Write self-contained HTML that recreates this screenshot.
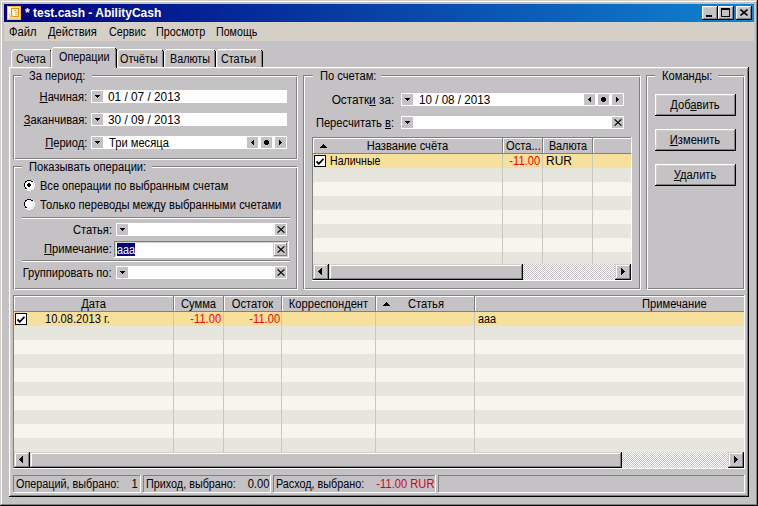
<!DOCTYPE html>
<html><head><meta charset="utf-8"><style>
html,body{margin:0;padding:0;width:758px;height:506px;overflow:hidden;background:#c5c2c6}
#w{position:relative;width:758px;height:506px;overflow:hidden}
#w div,#w span,#w svg{position:absolute;display:block}
#w span{font-family:"Liberation Sans",sans-serif;font-size:12px;line-height:13px;white-space:nowrap;color:#000;transform:scaleX(.93);transform-origin:0 0}
#w span.r{transform-origin:100% 0}
#w span.c{transform-origin:50% 0}
#w u{text-decoration:underline;text-underline-offset:1px}
</style></head><body><div id="w">
<div style="left:0px;top:0px;width:758px;height:506px;background:#c5c2c6;"></div>
<div style="left:0px;top:0px;width:758px;height:1px;background:#d4d0c8;"></div>
<div style="left:0px;top:0px;width:1px;height:506px;background:#d4d0c8;"></div>
<div style="left:1px;top:1px;width:756px;height:1px;background:#ffffff;"></div>
<div style="left:1px;top:1px;width:1px;height:504px;background:#ffffff;"></div>
<div style="left:0px;top:505px;width:758px;height:1px;background:#0a0a0a;"></div>
<div style="left:757px;top:0px;width:1px;height:506px;background:#0a0a0a;"></div>
<div style="left:1px;top:504px;width:756px;height:1px;background:#808080;"></div>
<div style="left:756px;top:1px;width:1px;height:504px;background:#808080;"></div>
<div style="left:4px;top:4px;width:750px;height:18px;background:linear-gradient(to right,#000080,#1084d0);"></div>
<svg style="left:7px;top:6px" width="14" height="14" viewBox="0 0 14 14" shape-rendering="crispEdges"><rect x="0" y="0" width="14" height="14" fill="#f7c148"/><rect x="1" y="1" width="12" height="12" fill="#fde9b0"/><rect x="1" y="1" width="3" height="11" fill="#fff8e8"/><rect x="4" y="2" width="8" height="9" fill="#f08c10"/><rect x="5" y="3" width="6" height="7" fill="#fff6e0"/><rect x="5" y="3" width="5" height="1" fill="#ffffff"/><rect x="7" y="4" width="2" height="1" fill="#f4a030"/><rect x="5" y="5" width="5" height="1" fill="#ffffff"/><rect x="8" y="6" width="2" height="1" fill="#f4a030"/><rect x="6" y="7" width="4" height="1" fill="#ffffff"/><rect x="8" y="8" width="2" height="1" fill="#f4a030"/><rect x="2" y="8" width="1" height="1" fill="#e8a020"/><rect x="4" y="7" width="1" height="1" fill="#e8a020"/><rect x="3" y="10" width="1" height="1" fill="#e8a020"/><rect x="5" y="9" width="1" height="1" fill="#e8a020"/><rect x="2" y="9" width="4" height="3" fill="#f6c870" opacity=".6"/><rect x="1" y="12" width="12" height="1" fill="#f4d890"/></svg>
<span style="left:25px;top:7px;color:#fff;font-weight:bold;font-size:12px;transform:none">* test.cash - AbilityCash</span>
<div style="left:702px;top:6px;width:16px;height:14px;background:#c5c2c6;"></div>
<div style="left:702px;top:6px;width:16px;height:1px;background:#ffffff;"></div>
<div style="left:702px;top:6px;width:1px;height:14px;background:#ffffff;"></div>
<div style="left:703px;top:7px;width:14px;height:1px;background:#d4d0c8;"></div>
<div style="left:703px;top:7px;width:1px;height:12px;background:#d4d0c8;"></div>
<div style="left:702px;top:19px;width:16px;height:1px;background:#000000;"></div>
<div style="left:717px;top:6px;width:1px;height:14px;background:#000000;"></div>
<div style="left:703px;top:18px;width:14px;height:1px;background:#808080;"></div>
<div style="left:716px;top:7px;width:1px;height:12px;background:#808080;"></div>
<div style="left:718px;top:6px;width:16px;height:14px;background:#c5c2c6;"></div>
<div style="left:718px;top:6px;width:16px;height:1px;background:#ffffff;"></div>
<div style="left:718px;top:6px;width:1px;height:14px;background:#ffffff;"></div>
<div style="left:719px;top:7px;width:14px;height:1px;background:#d4d0c8;"></div>
<div style="left:719px;top:7px;width:1px;height:12px;background:#d4d0c8;"></div>
<div style="left:718px;top:19px;width:16px;height:1px;background:#000000;"></div>
<div style="left:733px;top:6px;width:1px;height:14px;background:#000000;"></div>
<div style="left:719px;top:18px;width:14px;height:1px;background:#808080;"></div>
<div style="left:732px;top:7px;width:1px;height:12px;background:#808080;"></div>
<div style="left:736px;top:6px;width:16px;height:14px;background:#c5c2c6;"></div>
<div style="left:736px;top:6px;width:16px;height:1px;background:#ffffff;"></div>
<div style="left:736px;top:6px;width:1px;height:14px;background:#ffffff;"></div>
<div style="left:737px;top:7px;width:14px;height:1px;background:#d4d0c8;"></div>
<div style="left:737px;top:7px;width:1px;height:12px;background:#d4d0c8;"></div>
<div style="left:736px;top:19px;width:16px;height:1px;background:#000000;"></div>
<div style="left:751px;top:6px;width:1px;height:14px;background:#000000;"></div>
<div style="left:737px;top:18px;width:14px;height:1px;background:#808080;"></div>
<div style="left:750px;top:7px;width:1px;height:12px;background:#808080;"></div>
<div style="left:706px;top:15px;width:6px;height:2px;background:#000000;"></div>
<div style="left:721px;top:8px;width:9px;height:9px;background:transparent;border:1px solid #000;border-top-width:2px;box-sizing:border-box"></div>
<svg style="left:740px;top:9px" width="8" height="7"><path d="M0.5 0.5L7.5 6.5M7.5 0.5L0.5 6.5" stroke="#000" stroke-width="1.6"/></svg>
<div style="left:4px;top:22px;width:750px;height:19px;background:#d4d0c8;"></div>
<span style="left:9px;top:26px;transform:scaleX(0.93);">Файл</span>
<span style="left:48px;top:26px;transform:scaleX(0.93);">Действия</span>
<span style="left:109px;top:26px;transform:scaleX(0.9);">Сервис</span>
<span style="left:156px;top:26px;transform:scaleX(0.9);">Просмотр</span>
<span style="left:216px;top:26px;transform:scaleX(0.89);">Помощь</span>
<div style="left:9px;top:67px;width:740px;height:1px;background:#ffffff;"></div>
<div style="left:9px;top:67px;width:1px;height:430px;background:#ffffff;"></div>
<div style="left:9px;top:496px;width:740px;height:1px;background:#000000;"></div>
<div style="left:748px;top:67px;width:1px;height:430px;background:#000000;"></div>
<div style="left:10px;top:495px;width:738px;height:1px;background:#808080;"></div>
<div style="left:747px;top:68px;width:1px;height:428px;background:#808080;"></div>
<div style="left:10px;top:68px;width:737px;height:1px;background:#d4d0c8;"></div>
<div style="left:10px;top:68px;width:1px;height:427px;background:#d4d0c8;"></div>
<div style="left:11px;top:49px;width:41px;height:18px;background:#c5c2c6;"></div>
<div style="left:13px;top:49px;width:37px;height:1px;background:#ffffff;"></div>
<div style="left:11px;top:51px;width:1px;height:16px;background:#ffffff;"></div>
<div style="left:12px;top:50px;width:1px;height:1px;background:#ffffff;"></div>
<div style="left:13px;top:50px;width:37px;height:1px;background:#d4d0c8;"></div>
<div style="left:12px;top:51px;width:1px;height:16px;background:#d4d0c8;"></div>
<div style="left:50px;top:51px;width:1px;height:16px;background:#808080;"></div>
<div style="left:50px;top:50px;width:1px;height:1px;background:#000000;"></div>
<div style="left:51px;top:51px;width:1px;height:16px;background:#000000;"></div>
<span style="left:16px;top:53px;transform:scaleX(0.9);">Счета</span>
<div style="left:117px;top:49px;width:47px;height:18px;background:#c5c2c6;"></div>
<div style="left:119px;top:49px;width:43px;height:1px;background:#ffffff;"></div>
<div style="left:117px;top:51px;width:1px;height:16px;background:#ffffff;"></div>
<div style="left:118px;top:50px;width:1px;height:1px;background:#ffffff;"></div>
<div style="left:119px;top:50px;width:43px;height:1px;background:#d4d0c8;"></div>
<div style="left:118px;top:51px;width:1px;height:16px;background:#d4d0c8;"></div>
<div style="left:162px;top:51px;width:1px;height:16px;background:#808080;"></div>
<div style="left:162px;top:50px;width:1px;height:1px;background:#000000;"></div>
<div style="left:163px;top:51px;width:1px;height:16px;background:#000000;"></div>
<span style="left:120px;top:53px;transform:scaleX(0.9);">Отчёты</span>
<div style="left:164px;top:49px;width:52px;height:18px;background:#c5c2c6;"></div>
<div style="left:166px;top:49px;width:48px;height:1px;background:#ffffff;"></div>
<div style="left:164px;top:51px;width:1px;height:16px;background:#ffffff;"></div>
<div style="left:165px;top:50px;width:1px;height:1px;background:#ffffff;"></div>
<div style="left:166px;top:50px;width:48px;height:1px;background:#d4d0c8;"></div>
<div style="left:165px;top:51px;width:1px;height:16px;background:#d4d0c8;"></div>
<div style="left:214px;top:51px;width:1px;height:16px;background:#808080;"></div>
<div style="left:214px;top:50px;width:1px;height:1px;background:#000000;"></div>
<div style="left:215px;top:51px;width:1px;height:16px;background:#000000;"></div>
<span style="left:170px;top:53px;transform:scaleX(0.9);">Валюты</span>
<div style="left:216px;top:49px;width:47px;height:18px;background:#c5c2c6;"></div>
<div style="left:218px;top:49px;width:43px;height:1px;background:#ffffff;"></div>
<div style="left:216px;top:51px;width:1px;height:16px;background:#ffffff;"></div>
<div style="left:217px;top:50px;width:1px;height:1px;background:#ffffff;"></div>
<div style="left:218px;top:50px;width:43px;height:1px;background:#d4d0c8;"></div>
<div style="left:217px;top:51px;width:1px;height:16px;background:#d4d0c8;"></div>
<div style="left:261px;top:51px;width:1px;height:16px;background:#808080;"></div>
<div style="left:261px;top:50px;width:1px;height:1px;background:#000000;"></div>
<div style="left:262px;top:51px;width:1px;height:16px;background:#000000;"></div>
<span style="left:221px;top:53px;transform:scaleX(0.9);">Статьи</span>
<div style="left:51px;top:47px;width:66px;height:21px;background:#c5c2c6;"></div>
<div style="left:53px;top:47px;width:62px;height:1px;background:#ffffff;"></div>
<div style="left:51px;top:49px;width:1px;height:19px;background:#ffffff;"></div>
<div style="left:52px;top:48px;width:1px;height:1px;background:#ffffff;"></div>
<div style="left:53px;top:48px;width:62px;height:1px;background:#d4d0c8;"></div>
<div style="left:52px;top:49px;width:1px;height:19px;background:#d4d0c8;"></div>
<div style="left:115px;top:49px;width:1px;height:19px;background:#808080;"></div>
<div style="left:115px;top:48px;width:1px;height:1px;background:#000000;"></div>
<div style="left:116px;top:49px;width:1px;height:19px;background:#000000;"></div>
<span style="left:59px;top:51px;transform:scaleX(0.9);">Операции</span>
<div style="left:52px;top:67px;width:64px;height:2px;background:#c5c2c6;"></div>
<div style="left:13px;top:75px;width:284px;height:1px;background:#808080;"></div>
<div style="left:13px;top:75px;width:1px;height:84px;background:#808080;"></div>
<div style="left:13px;top:158px;width:284px;height:1px;background:#808080;"></div>
<div style="left:296px;top:75px;width:1px;height:84px;background:#808080;"></div>
<div style="left:14px;top:76px;width:284px;height:1px;background:#ffffff;"></div>
<div style="left:14px;top:76px;width:1px;height:84px;background:#ffffff;"></div>
<div style="left:14px;top:159px;width:284px;height:1px;background:#ffffff;"></div>
<div style="left:297px;top:76px;width:1px;height:84px;background:#ffffff;"></div>
<div style="left:22px;top:75px;width:70px;height:2px;background:#c5c2c6;"></div>
<span style="left:29px;top:70px;">За период:</span>
<div style="left:91px;top:90px;width:196px;height:13px;background:#ffffff;"></div>
<div style="left:92px;top:91px;width:11px;height:11px;background:#c5c2c6;"></div>
<svg style="left:95px;top:95px" width="5" height="3"><path d="M0 0h5v1h-1v1h-1v1h-1v-1h-1v-1h-1z" fill="#000"/></svg>
<span class="r" style="right:671px;top:91px;"><u>Н</u>ачиная:</span>
<span style="left:108px;top:91px;transform:scaleX(0.985);">01 / 07 / 2013</span>
<div style="left:91px;top:113px;width:196px;height:13px;background:#ffffff;"></div>
<div style="left:92px;top:114px;width:11px;height:11px;background:#c5c2c6;"></div>
<svg style="left:95px;top:118px" width="5" height="3"><path d="M0 0h5v1h-1v1h-1v1h-1v-1h-1v-1h-1z" fill="#000"/></svg>
<span class="r" style="right:671px;top:114px;"><u>З</u>аканчивая:</span>
<span style="left:108px;top:114px;transform:scaleX(0.985);">30 / 09 / 2013</span>
<div style="left:91px;top:136px;width:196px;height:13px;background:#ffffff;"></div>
<div style="left:92px;top:137px;width:11px;height:11px;background:#c5c2c6;"></div>
<svg style="left:95px;top:141px" width="5" height="3"><path d="M0 0h5v1h-1v1h-1v1h-1v-1h-1v-1h-1z" fill="#000"/></svg>
<span class="r" style="right:671px;top:137px;"><u>П</u>ериод:</span>
<span style="left:109px;top:137px;">Три месяца</span>
<div style="left:247px;top:137px;width:11px;height:11px;background:#c5c2c6;"></div>
<svg style="left:251px;top:140px" width="3" height="5"><path d="M2 0h1v5h-1v-1h-1v-1h-1v-1h1v-1h1z" fill="#000"/></svg>
<div style="left:261px;top:137px;width:11px;height:11px;background:#c5c2c6;"></div>
<svg style="left:264px;top:140px" width="5" height="5"><path d="M1 0h3v1h1v3h-1v1h-3v-1h-1v-3h1z" fill="#000"/></svg>
<div style="left:275px;top:137px;width:11px;height:11px;background:#c5c2c6;"></div>
<svg style="left:279px;top:140px" width="3" height="5"><path d="M0 0h1v1h1v1h1v1h-1v1h-1v1h-1z" fill="#000"/></svg>
<div style="left:13px;top:166px;width:284px;height:1px;background:#808080;"></div>
<div style="left:13px;top:166px;width:1px;height:123px;background:#808080;"></div>
<div style="left:13px;top:288px;width:284px;height:1px;background:#808080;"></div>
<div style="left:296px;top:166px;width:1px;height:123px;background:#808080;"></div>
<div style="left:14px;top:167px;width:284px;height:1px;background:#ffffff;"></div>
<div style="left:14px;top:167px;width:1px;height:123px;background:#ffffff;"></div>
<div style="left:14px;top:289px;width:284px;height:1px;background:#ffffff;"></div>
<div style="left:297px;top:167px;width:1px;height:123px;background:#ffffff;"></div>
<div style="left:22px;top:166px;width:130px;height:2px;background:#c5c2c6;"></div>
<span style="left:29px;top:161px;">Показывать операции:</span>
<svg style="left:23px;top:179px" width="12" height="12" shape-rendering="crispEdges"><rect x="4" y="2" width="4" height="1" fill="#fff"/><rect x="3" y="3" width="6" height="1" fill="#fff"/><rect x="2" y="4" width="8" height="1" fill="#fff"/><rect x="2" y="5" width="8" height="1" fill="#fff"/><rect x="2" y="6" width="8" height="1" fill="#fff"/><rect x="2" y="7" width="8" height="1" fill="#fff"/><rect x="3" y="8" width="6" height="1" fill="#fff"/><rect x="4" y="9" width="4" height="1" fill="#fff"/><rect x="4" y="1" width="4" height="1" fill="#000"/><rect x="2" y="2" width="2" height="1" fill="#000"/><rect x="8" y="2" width="2" height="1" fill="#000"/><rect x="2" y="3" width="1" height="1" fill="#000"/><rect x="1" y="4" width="1" height="1" fill="#000"/><rect x="1" y="5" width="1" height="1" fill="#000"/><rect x="1" y="6" width="1" height="1" fill="#000"/><rect x="1" y="7" width="1" height="1" fill="#000"/><rect x="2" y="8" width="1" height="1" fill="#000"/><rect x="2" y="9" width="2" height="1" fill="#000"/><rect x="9" y="3" width="1" height="1" fill="#e8e8e8"/><rect x="10" y="4" width="1" height="1" fill="#e8e8e8"/><rect x="10" y="5" width="1" height="1" fill="#e8e8e8"/><rect x="10" y="6" width="1" height="1" fill="#e8e8e8"/><rect x="10" y="7" width="1" height="1" fill="#e8e8e8"/><rect x="9" y="8" width="1" height="1" fill="#e8e8e8"/><rect x="8" y="9" width="2" height="1" fill="#e8e8e8"/><rect x="4" y="10" width="4" height="1" fill="#e8e8e8"/><rect x="10" y="2" width="1" height="1" fill="#fff"/><rect x="10" y="3" width="1" height="1" fill="#fff"/><rect x="11" y="4" width="1" height="1" fill="#fff"/><rect x="11" y="5" width="1" height="1" fill="#fff"/><rect x="11" y="6" width="1" height="1" fill="#fff"/><rect x="11" y="7" width="1" height="1" fill="#fff"/><rect x="10" y="8" width="1" height="1" fill="#fff"/><rect x="10" y="9" width="1" height="1" fill="#fff"/><rect x="8" y="10" width="2" height="1" fill="#fff"/><rect x="2" y="10" width="2" height="1" fill="#fff"/><rect x="4" y="11" width="4" height="1" fill="#fff"/><rect x="5" y="4" width="2" height="1" fill="#000"/><rect x="4" y="5" width="4" height="1" fill="#000"/><rect x="4" y="6" width="4" height="1" fill="#000"/><rect x="5" y="7" width="2" height="1" fill="#000"/></svg>
<span style="left:40px;top:180px;transform:scaleX(0.92);">Все операции по выбранным счетам</span>
<svg style="left:23px;top:198px" width="12" height="12" shape-rendering="crispEdges"><rect x="4" y="2" width="4" height="1" fill="#fff"/><rect x="3" y="3" width="6" height="1" fill="#fff"/><rect x="2" y="4" width="8" height="1" fill="#fff"/><rect x="2" y="5" width="8" height="1" fill="#fff"/><rect x="2" y="6" width="8" height="1" fill="#fff"/><rect x="2" y="7" width="8" height="1" fill="#fff"/><rect x="3" y="8" width="6" height="1" fill="#fff"/><rect x="4" y="9" width="4" height="1" fill="#fff"/><rect x="4" y="1" width="4" height="1" fill="#000"/><rect x="2" y="2" width="2" height="1" fill="#000"/><rect x="8" y="2" width="2" height="1" fill="#000"/><rect x="2" y="3" width="1" height="1" fill="#000"/><rect x="1" y="4" width="1" height="1" fill="#000"/><rect x="1" y="5" width="1" height="1" fill="#000"/><rect x="1" y="6" width="1" height="1" fill="#000"/><rect x="1" y="7" width="1" height="1" fill="#000"/><rect x="2" y="8" width="1" height="1" fill="#000"/><rect x="2" y="9" width="2" height="1" fill="#000"/><rect x="9" y="3" width="1" height="1" fill="#e8e8e8"/><rect x="10" y="4" width="1" height="1" fill="#e8e8e8"/><rect x="10" y="5" width="1" height="1" fill="#e8e8e8"/><rect x="10" y="6" width="1" height="1" fill="#e8e8e8"/><rect x="10" y="7" width="1" height="1" fill="#e8e8e8"/><rect x="9" y="8" width="1" height="1" fill="#e8e8e8"/><rect x="8" y="9" width="2" height="1" fill="#e8e8e8"/><rect x="4" y="10" width="4" height="1" fill="#e8e8e8"/><rect x="10" y="2" width="1" height="1" fill="#fff"/><rect x="10" y="3" width="1" height="1" fill="#fff"/><rect x="11" y="4" width="1" height="1" fill="#fff"/><rect x="11" y="5" width="1" height="1" fill="#fff"/><rect x="11" y="6" width="1" height="1" fill="#fff"/><rect x="11" y="7" width="1" height="1" fill="#fff"/><rect x="10" y="8" width="1" height="1" fill="#fff"/><rect x="10" y="9" width="1" height="1" fill="#fff"/><rect x="8" y="10" width="2" height="1" fill="#fff"/><rect x="2" y="10" width="2" height="1" fill="#fff"/><rect x="4" y="11" width="4" height="1" fill="#fff"/></svg>
<span style="left:40px;top:199px;">Только переводы между выбранными счетами</span>
<div style="left:22px;top:217px;width:268px;height:1px;background:#808080;"></div>
<div style="left:22px;top:218px;width:268px;height:1px;background:#ffffff;"></div>
<div style="left:116px;top:223px;width:171px;height:13px;background:#ffffff;"></div>
<div style="left:117px;top:224px;width:11px;height:11px;background:#c5c2c6;"></div>
<svg style="left:120px;top:228px" width="5" height="3"><path d="M0 0h5v1h-1v1h-1v1h-1v-1h-1v-1h-1z" fill="#000"/></svg>
<span class="r" style="right:646px;top:224px;">Статья:</span>
<div style="left:275px;top:224px;width:11px;height:11px;background:#c5c2c6;"></div>
<svg style="left:277px;top:226px" width="8" height="7"><path d="M0.6 0.4L7.4 6.6M7.4 0.4L0.6 6.6" stroke="#000" stroke-width="1.2"/></svg>
<div style="left:114px;top:241px;width:175px;height:17px;background:#ffffff;"></div>
<div style="left:114px;top:241px;width:174px;height:1px;background:#808080;"></div>
<div style="left:114px;top:241px;width:1px;height:16px;background:#808080;"></div>
<div style="left:115px;top:242px;width:172px;height:1px;background:#d4d0c8;"></div>
<div style="left:115px;top:242px;width:1px;height:14px;background:#d4d0c8;"></div>
<div style="left:114px;top:257px;width:175px;height:1px;background:#ffffff;"></div>
<div style="left:288px;top:241px;width:1px;height:17px;background:#ffffff;"></div>
<div style="left:117px;top:243px;width:18px;height:13px;background:#000080;"></div>
<span style="left:117px;top:244px;transform:scaleX(0.9);color:#fff">aaa</span>
<span class="r" style="right:646px;top:243px;"><u>П</u>римечание:</span>
<div style="left:273px;top:242px;width:15px;height:15px;background:#c5c2c6;"></div>
<div style="left:273px;top:242px;width:15px;height:1px;background:#d4d0c8;"></div>
<div style="left:273px;top:242px;width:1px;height:15px;background:#d4d0c8;"></div>
<div style="left:274px;top:243px;width:13px;height:1px;background:#ffffff;"></div>
<div style="left:274px;top:243px;width:1px;height:13px;background:#ffffff;"></div>
<div style="left:274px;top:255px;width:13px;height:1px;background:#808080;"></div>
<div style="left:286px;top:243px;width:1px;height:13px;background:#808080;"></div>
<div style="left:273px;top:256px;width:15px;height:1px;background:#d4d0c8;"></div>
<div style="left:287px;top:242px;width:1px;height:15px;background:#d4d0c8;"></div>
<svg style="left:277px;top:246px" width="8" height="7"><path d="M0.6 0.4L7.4 6.6M7.4 0.4L0.6 6.6" stroke="#000" stroke-width="1.2"/></svg>
<div style="left:22px;top:260px;width:268px;height:1px;background:#808080;"></div>
<div style="left:22px;top:261px;width:268px;height:1px;background:#ffffff;"></div>
<div style="left:116px;top:266px;width:171px;height:13px;background:#ffffff;"></div>
<div style="left:117px;top:267px;width:11px;height:11px;background:#c5c2c6;"></div>
<svg style="left:120px;top:271px" width="5" height="3"><path d="M0 0h5v1h-1v1h-1v1h-1v-1h-1v-1h-1z" fill="#000"/></svg>
<span class="r" style="right:646px;top:267px;">Группировать по:</span>
<div style="left:275px;top:267px;width:11px;height:11px;background:#c5c2c6;"></div>
<svg style="left:277px;top:269px" width="8" height="7"><path d="M0.6 0.4L7.4 6.6M7.4 0.4L0.6 6.6" stroke="#000" stroke-width="1.2"/></svg>
<div style="left:303px;top:75px;width:337px;height:1px;background:#808080;"></div>
<div style="left:303px;top:75px;width:1px;height:214px;background:#808080;"></div>
<div style="left:303px;top:288px;width:337px;height:1px;background:#808080;"></div>
<div style="left:639px;top:75px;width:1px;height:214px;background:#808080;"></div>
<div style="left:304px;top:76px;width:337px;height:1px;background:#ffffff;"></div>
<div style="left:304px;top:76px;width:1px;height:214px;background:#ffffff;"></div>
<div style="left:304px;top:289px;width:337px;height:1px;background:#ffffff;"></div>
<div style="left:640px;top:76px;width:1px;height:214px;background:#ffffff;"></div>
<div style="left:313px;top:75px;width:68px;height:2px;background:#c5c2c6;"></div>
<span style="left:320px;top:70px;">По счетам:</span>
<div style="left:401px;top:93px;width:223px;height:13px;background:#ffffff;"></div>
<div style="left:402px;top:94px;width:11px;height:11px;background:#c5c2c6;"></div>
<svg style="left:405px;top:98px" width="5" height="3"><path d="M0 0h5v1h-1v1h-1v1h-1v-1h-1v-1h-1z" fill="#000"/></svg>
<span class="r" style="right:364px;top:94px;transform:scaleX(0.99);">Остатк<u>и</u> за:</span>
<span style="left:419px;top:94px;transform:scaleX(0.97);">10 / 08 / 2013</span>
<div style="left:584px;top:94px;width:11px;height:11px;background:#c5c2c6;"></div>
<svg style="left:588px;top:97px" width="3" height="5"><path d="M2 0h1v5h-1v-1h-1v-1h-1v-1h1v-1h1z" fill="#000"/></svg>
<div style="left:598px;top:94px;width:11px;height:11px;background:#c5c2c6;"></div>
<svg style="left:601px;top:97px" width="5" height="5"><path d="M1 0h3v1h1v3h-1v1h-3v-1h-1v-3h1z" fill="#000"/></svg>
<div style="left:612px;top:94px;width:11px;height:11px;background:#c5c2c6;"></div>
<svg style="left:616px;top:97px" width="3" height="5"><path d="M0 0h1v1h1v1h1v1h-1v1h-1v1h-1z" fill="#000"/></svg>
<div style="left:401px;top:116px;width:223px;height:13px;background:#ffffff;"></div>
<div style="left:402px;top:117px;width:11px;height:11px;background:#c5c2c6;"></div>
<svg style="left:405px;top:121px" width="5" height="3"><path d="M0 0h5v1h-1v1h-1v1h-1v-1h-1v-1h-1z" fill="#000"/></svg>
<span class="r" style="right:364px;top:117px;">Пересчитать <u>в</u>:</span>
<div style="left:612px;top:117px;width:11px;height:11px;background:#c5c2c6;"></div>
<svg style="left:614px;top:119px" width="8" height="7"><path d="M0.6 0.4L7.4 6.6M7.4 0.4L0.6 6.6" stroke="#000" stroke-width="1.2"/></svg>
<div style="left:312px;top:137px;width:320px;height:144px;background:#c5c2c6;"></div>
<div style="left:312px;top:137px;width:319px;height:1px;background:#808080;"></div>
<div style="left:312px;top:137px;width:1px;height:143px;background:#808080;"></div>
<div style="left:312px;top:280px;width:320px;height:1px;background:#ffffff;"></div>
<div style="left:631px;top:137px;width:1px;height:144px;background:#ffffff;"></div>
<div style="left:313px;top:138px;width:318px;height:16px;background:#c5c2c6;"></div>
<div style="left:313px;top:138px;width:318px;height:1px;background:#ffffff;"></div>
<div style="left:313px;top:153px;width:318px;height:1px;background:#808080;"></div>
<div style="left:313px;top:138px;width:1px;height:15px;background:#ffffff;"></div>
<div style="left:502px;top:138px;width:1px;height:16px;background:#808080;"></div>
<div style="left:503px;top:138px;width:1px;height:15px;background:#ffffff;"></div>
<div style="left:542px;top:138px;width:1px;height:16px;background:#808080;"></div>
<div style="left:543px;top:138px;width:1px;height:15px;background:#ffffff;"></div>
<div style="left:592px;top:138px;width:1px;height:16px;background:#808080;"></div>
<div style="left:593px;top:138px;width:1px;height:15px;background:#ffffff;"></div>
<div style="left:313px;top:154px;width:318px;height:14px;background:#f7df9c;"></div>
<div style="left:313px;top:168px;width:318px;height:14px;background:#e7e6de;"></div>
<div style="left:313px;top:182px;width:318px;height:14px;background:#f6f5ee;"></div>
<div style="left:313px;top:196px;width:318px;height:14px;background:#e7e6de;"></div>
<div style="left:313px;top:210px;width:318px;height:14px;background:#f6f5ee;"></div>
<div style="left:313px;top:224px;width:318px;height:14px;background:#e7e6de;"></div>
<div style="left:313px;top:238px;width:318px;height:14px;background:#f6f5ee;"></div>
<div style="left:313px;top:252px;width:318px;height:12px;background:#e7e6de;"></div>
<div style="left:502px;top:154px;width:1px;height:110px;background:#c8c8c0;"></div>
<div style="left:542px;top:154px;width:1px;height:110px;background:#c8c8c0;"></div>
<div style="left:592px;top:154px;width:1px;height:110px;background:#c8c8c0;"></div>
<div style="left:313px;top:264px;width:318px;height:16px;background-color:#fff;background-image:linear-gradient(45deg,#c5c2c6 25%,transparent 25%,transparent 75%,#c5c2c6 75%),linear-gradient(45deg,#c5c2c6 25%,transparent 25%,transparent 75%,#c5c2c6 75%);background-size:2px 2px;background-position:0 0,1px 1px"></div>
<div style="left:313px;top:264px;width:16px;height:16px;background:#c5c2c6;"></div>
<div style="left:313px;top:264px;width:16px;height:1px;background:#d4d0c8;"></div>
<div style="left:313px;top:264px;width:1px;height:16px;background:#d4d0c8;"></div>
<div style="left:314px;top:265px;width:14px;height:1px;background:#ffffff;"></div>
<div style="left:314px;top:265px;width:1px;height:14px;background:#ffffff;"></div>
<div style="left:313px;top:279px;width:16px;height:1px;background:#000000;"></div>
<div style="left:328px;top:264px;width:1px;height:16px;background:#000000;"></div>
<div style="left:314px;top:278px;width:14px;height:1px;background:#808080;"></div>
<div style="left:327px;top:265px;width:1px;height:14px;background:#808080;"></div>
<svg style="left:318px;top:268px" width="4" height="7"><path d="M3 0h1v7h-1v-1h-1v-1h-1v-1h-1v-1h1v-1h1v-1h1z" fill="#000"/></svg>
<div style="left:329px;top:264px;width:194px;height:16px;background:#c5c2c6;"></div>
<div style="left:329px;top:264px;width:194px;height:1px;background:#d4d0c8;"></div>
<div style="left:329px;top:264px;width:1px;height:16px;background:#d4d0c8;"></div>
<div style="left:330px;top:265px;width:192px;height:1px;background:#ffffff;"></div>
<div style="left:330px;top:265px;width:1px;height:14px;background:#ffffff;"></div>
<div style="left:329px;top:279px;width:194px;height:1px;background:#000000;"></div>
<div style="left:522px;top:264px;width:1px;height:16px;background:#000000;"></div>
<div style="left:330px;top:278px;width:192px;height:1px;background:#808080;"></div>
<div style="left:521px;top:265px;width:1px;height:14px;background:#808080;"></div>
<div style="left:615px;top:264px;width:16px;height:16px;background:#c5c2c6;"></div>
<div style="left:615px;top:264px;width:16px;height:1px;background:#d4d0c8;"></div>
<div style="left:615px;top:264px;width:1px;height:16px;background:#d4d0c8;"></div>
<div style="left:616px;top:265px;width:14px;height:1px;background:#ffffff;"></div>
<div style="left:616px;top:265px;width:1px;height:14px;background:#ffffff;"></div>
<div style="left:615px;top:279px;width:16px;height:1px;background:#000000;"></div>
<div style="left:630px;top:264px;width:1px;height:16px;background:#000000;"></div>
<div style="left:616px;top:278px;width:14px;height:1px;background:#808080;"></div>
<div style="left:629px;top:265px;width:1px;height:14px;background:#808080;"></div>
<svg style="left:621px;top:268px" width="4" height="7"><path d="M0 0h1v1h1v1h1v1h1v1h-1v1h-1v1h-1v1h-1z" fill="#000"/></svg>
<svg style="left:320px;top:144px" width="7" height="4"><path d="M3 0h1v1h1v1h1v1h1v1h-7v-1h1v-1h1v-1h1z" fill="#000"/></svg>
<span class="c" style="left:313px;width:189px;text-align:center;top:140px;">Название счёта</span>
<span style="left:506px;top:140px;">Оста...</span>
<span class="c" style="left:543px;width:50px;text-align:center;top:140px;transform:scaleX(0.9);">Валюта</span>
<div style="left:314px;top:155px;width:12px;height:12px;box-sizing:border-box;border:1px solid #000;background:#fff"></div>
<svg style="left:316px;top:158px" width="8" height="7"><path d="M0.5 3.5L2.8 5.8L7.5 0.8" stroke="#000" stroke-width="1.8" fill="none"/></svg>
<span style="left:330px;top:155px;transform:scaleX(0.88);">Наличные</span>
<span class="r" style="right:218px;top:155px;color:#ff0000">-11.00</span>
<span style="left:546px;top:155px;transform:scaleX(1.0);">RUR</span>
<div style="left:646px;top:75px;width:98px;height:1px;background:#808080;"></div>
<div style="left:646px;top:75px;width:1px;height:214px;background:#808080;"></div>
<div style="left:646px;top:288px;width:98px;height:1px;background:#808080;"></div>
<div style="left:743px;top:75px;width:1px;height:214px;background:#808080;"></div>
<div style="left:647px;top:76px;width:98px;height:1px;background:#ffffff;"></div>
<div style="left:647px;top:76px;width:1px;height:214px;background:#ffffff;"></div>
<div style="left:647px;top:289px;width:98px;height:1px;background:#ffffff;"></div>
<div style="left:744px;top:76px;width:1px;height:214px;background:#ffffff;"></div>
<div style="left:655px;top:75px;width:63px;height:2px;background:#c5c2c6;"></div>
<span style="left:662px;top:70px;">Команды:</span>
<div style="left:655px;top:94px;width:81px;height:22px;background:#c5c2c6;"></div>
<div style="left:655px;top:94px;width:81px;height:1px;background:#ffffff;"></div>
<div style="left:655px;top:94px;width:1px;height:22px;background:#ffffff;"></div>
<div style="left:656px;top:95px;width:79px;height:1px;background:#d4d0c8;"></div>
<div style="left:656px;top:95px;width:1px;height:20px;background:#d4d0c8;"></div>
<div style="left:655px;top:115px;width:81px;height:1px;background:#000000;"></div>
<div style="left:735px;top:94px;width:1px;height:22px;background:#000000;"></div>
<div style="left:656px;top:114px;width:79px;height:1px;background:#808080;"></div>
<div style="left:734px;top:95px;width:1px;height:20px;background:#808080;"></div>
<span class="c" style="left:655px;width:80px;text-align:center;top:99px;">Доб<u>а</u>вить</span>
<div style="left:655px;top:129px;width:81px;height:22px;background:#c5c2c6;"></div>
<div style="left:655px;top:129px;width:81px;height:1px;background:#ffffff;"></div>
<div style="left:655px;top:129px;width:1px;height:22px;background:#ffffff;"></div>
<div style="left:656px;top:130px;width:79px;height:1px;background:#d4d0c8;"></div>
<div style="left:656px;top:130px;width:1px;height:20px;background:#d4d0c8;"></div>
<div style="left:655px;top:150px;width:81px;height:1px;background:#000000;"></div>
<div style="left:735px;top:129px;width:1px;height:22px;background:#000000;"></div>
<div style="left:656px;top:149px;width:79px;height:1px;background:#808080;"></div>
<div style="left:734px;top:130px;width:1px;height:20px;background:#808080;"></div>
<span class="c" style="left:655px;width:80px;text-align:center;top:134px;"><u>И</u>зменить</span>
<div style="left:655px;top:164px;width:81px;height:22px;background:#c5c2c6;"></div>
<div style="left:655px;top:164px;width:81px;height:1px;background:#ffffff;"></div>
<div style="left:655px;top:164px;width:1px;height:22px;background:#ffffff;"></div>
<div style="left:656px;top:165px;width:79px;height:1px;background:#d4d0c8;"></div>
<div style="left:656px;top:165px;width:1px;height:20px;background:#d4d0c8;"></div>
<div style="left:655px;top:185px;width:81px;height:1px;background:#000000;"></div>
<div style="left:735px;top:164px;width:1px;height:22px;background:#000000;"></div>
<div style="left:656px;top:184px;width:79px;height:1px;background:#808080;"></div>
<div style="left:734px;top:165px;width:1px;height:20px;background:#808080;"></div>
<span class="c" style="left:655px;width:80px;text-align:center;top:169px;"><u>У</u>далить</span>
<div style="left:13px;top:295px;width:732px;height:174px;background:#c5c2c6;"></div>
<div style="left:13px;top:295px;width:731px;height:1px;background:#808080;"></div>
<div style="left:13px;top:295px;width:1px;height:173px;background:#808080;"></div>
<div style="left:13px;top:468px;width:732px;height:1px;background:#ffffff;"></div>
<div style="left:744px;top:295px;width:1px;height:174px;background:#ffffff;"></div>
<div style="left:14px;top:296px;width:730px;height:16px;background:#c5c2c6;"></div>
<div style="left:14px;top:296px;width:730px;height:1px;background:#ffffff;"></div>
<div style="left:14px;top:311px;width:730px;height:1px;background:#808080;"></div>
<div style="left:14px;top:296px;width:1px;height:15px;background:#ffffff;"></div>
<div style="left:173px;top:296px;width:1px;height:16px;background:#808080;"></div>
<div style="left:174px;top:296px;width:1px;height:15px;background:#ffffff;"></div>
<div style="left:223px;top:296px;width:1px;height:16px;background:#808080;"></div>
<div style="left:224px;top:296px;width:1px;height:15px;background:#ffffff;"></div>
<div style="left:281px;top:296px;width:1px;height:16px;background:#808080;"></div>
<div style="left:282px;top:296px;width:1px;height:15px;background:#ffffff;"></div>
<div style="left:375px;top:296px;width:1px;height:16px;background:#808080;"></div>
<div style="left:376px;top:296px;width:1px;height:15px;background:#ffffff;"></div>
<div style="left:474px;top:296px;width:1px;height:16px;background:#808080;"></div>
<div style="left:475px;top:296px;width:1px;height:15px;background:#ffffff;"></div>
<div style="left:14px;top:312px;width:730px;height:14px;background:#f7df9c;"></div>
<div style="left:14px;top:326px;width:730px;height:14px;background:#e7e6de;"></div>
<div style="left:14px;top:340px;width:730px;height:14px;background:#f6f5ee;"></div>
<div style="left:14px;top:354px;width:730px;height:14px;background:#e7e6de;"></div>
<div style="left:14px;top:368px;width:730px;height:14px;background:#f6f5ee;"></div>
<div style="left:14px;top:382px;width:730px;height:14px;background:#e7e6de;"></div>
<div style="left:14px;top:396px;width:730px;height:14px;background:#f6f5ee;"></div>
<div style="left:14px;top:410px;width:730px;height:14px;background:#e7e6de;"></div>
<div style="left:14px;top:424px;width:730px;height:14px;background:#f6f5ee;"></div>
<div style="left:14px;top:438px;width:730px;height:14px;background:#e7e6de;"></div>
<div style="left:173px;top:312px;width:1px;height:140px;background:#c8c8c0;"></div>
<div style="left:223px;top:312px;width:1px;height:140px;background:#c8c8c0;"></div>
<div style="left:281px;top:312px;width:1px;height:140px;background:#c8c8c0;"></div>
<div style="left:375px;top:312px;width:1px;height:140px;background:#c8c8c0;"></div>
<div style="left:474px;top:312px;width:1px;height:140px;background:#c8c8c0;"></div>
<div style="left:14px;top:452px;width:730px;height:16px;background-color:#fff;background-image:linear-gradient(45deg,#c5c2c6 25%,transparent 25%,transparent 75%,#c5c2c6 75%),linear-gradient(45deg,#c5c2c6 25%,transparent 25%,transparent 75%,#c5c2c6 75%);background-size:2px 2px;background-position:0 0,1px 1px"></div>
<div style="left:14px;top:452px;width:16px;height:16px;background:#c5c2c6;"></div>
<div style="left:14px;top:452px;width:16px;height:1px;background:#d4d0c8;"></div>
<div style="left:14px;top:452px;width:1px;height:16px;background:#d4d0c8;"></div>
<div style="left:15px;top:453px;width:14px;height:1px;background:#ffffff;"></div>
<div style="left:15px;top:453px;width:1px;height:14px;background:#ffffff;"></div>
<div style="left:14px;top:467px;width:16px;height:1px;background:#000000;"></div>
<div style="left:29px;top:452px;width:1px;height:16px;background:#000000;"></div>
<div style="left:15px;top:466px;width:14px;height:1px;background:#808080;"></div>
<div style="left:28px;top:453px;width:1px;height:14px;background:#808080;"></div>
<svg style="left:19px;top:456px" width="4" height="7"><path d="M3 0h1v7h-1v-1h-1v-1h-1v-1h-1v-1h1v-1h1v-1h1z" fill="#000"/></svg>
<div style="left:30px;top:452px;width:592px;height:16px;background:#c5c2c6;"></div>
<div style="left:30px;top:452px;width:592px;height:1px;background:#d4d0c8;"></div>
<div style="left:30px;top:452px;width:1px;height:16px;background:#d4d0c8;"></div>
<div style="left:31px;top:453px;width:590px;height:1px;background:#ffffff;"></div>
<div style="left:31px;top:453px;width:1px;height:14px;background:#ffffff;"></div>
<div style="left:30px;top:467px;width:592px;height:1px;background:#000000;"></div>
<div style="left:621px;top:452px;width:1px;height:16px;background:#000000;"></div>
<div style="left:31px;top:466px;width:590px;height:1px;background:#808080;"></div>
<div style="left:620px;top:453px;width:1px;height:14px;background:#808080;"></div>
<div style="left:728px;top:452px;width:16px;height:16px;background:#c5c2c6;"></div>
<div style="left:728px;top:452px;width:16px;height:1px;background:#d4d0c8;"></div>
<div style="left:728px;top:452px;width:1px;height:16px;background:#d4d0c8;"></div>
<div style="left:729px;top:453px;width:14px;height:1px;background:#ffffff;"></div>
<div style="left:729px;top:453px;width:1px;height:14px;background:#ffffff;"></div>
<div style="left:728px;top:467px;width:16px;height:1px;background:#000000;"></div>
<div style="left:743px;top:452px;width:1px;height:16px;background:#000000;"></div>
<div style="left:729px;top:466px;width:14px;height:1px;background:#808080;"></div>
<div style="left:742px;top:453px;width:1px;height:14px;background:#808080;"></div>
<svg style="left:734px;top:456px" width="4" height="7"><path d="M0 0h1v1h1v1h1v1h1v1h-1v1h-1v1h-1v1h-1z" fill="#000"/></svg>
<span class="c" style="left:14px;width:159px;text-align:center;top:298px;">Дата</span>
<span class="c" style="left:174px;width:49px;text-align:center;top:298px;">Сумма</span>
<span class="c" style="left:224px;width:57px;text-align:center;top:298px;">Остаток</span>
<span class="c" style="left:282px;width:93px;text-align:center;top:298px;">Корреспондент</span>
<svg style="left:383px;top:302px" width="7" height="4"><path d="M3 0h1v1h1v1h1v1h1v1h-7v-1h1v-1h1v-1h1z" fill="#000"/></svg>
<span style="left:408px;top:298px;">Статья</span>
<span style="left:642px;top:298px;">Примечание</span>
<div style="left:15px;top:313px;width:12px;height:12px;box-sizing:border-box;border:1px solid #000;background:#fff"></div>
<svg style="left:17px;top:316px" width="8" height="7"><path d="M0.5 3.5L2.8 5.8L7.5 0.8" stroke="#000" stroke-width="1.8" fill="none"/></svg>
<span style="left:45px;top:313px;">10.08.2013 г.</span>
<span class="r" style="right:537px;top:313px;color:#ff0000">-11.00</span>
<span class="r" style="right:478px;top:313px;color:#ff0000">-11.00</span>
<span style="left:478px;top:313px;transform:scaleX(0.9);">aaa</span>
<div style="left:13px;top:475px;width:127px;height:1px;background:#808080;"></div>
<div style="left:13px;top:475px;width:1px;height:17px;background:#808080;"></div>
<div style="left:13px;top:492px;width:128px;height:1px;background:#ffffff;"></div>
<div style="left:140px;top:475px;width:1px;height:18px;background:#ffffff;"></div>
<div style="left:143px;top:475px;width:127px;height:1px;background:#808080;"></div>
<div style="left:143px;top:475px;width:1px;height:17px;background:#808080;"></div>
<div style="left:143px;top:492px;width:128px;height:1px;background:#ffffff;"></div>
<div style="left:270px;top:475px;width:1px;height:18px;background:#ffffff;"></div>
<div style="left:273px;top:475px;width:162px;height:1px;background:#808080;"></div>
<div style="left:273px;top:475px;width:1px;height:17px;background:#808080;"></div>
<div style="left:273px;top:492px;width:163px;height:1px;background:#ffffff;"></div>
<div style="left:435px;top:475px;width:1px;height:18px;background:#ffffff;"></div>
<div style="left:438px;top:475px;width:306px;height:1px;background:#808080;"></div>
<div style="left:438px;top:475px;width:1px;height:17px;background:#808080;"></div>
<div style="left:438px;top:492px;width:307px;height:1px;background:#ffffff;"></div>
<div style="left:744px;top:475px;width:1px;height:18px;background:#ffffff;"></div>
<span style="left:16px;top:478px;transform:scaleX(0.9);">Операций, выбрано:</span>
<span class="r" style="right:620px;top:478px;">1</span>
<span style="left:146px;top:478px;transform:scaleX(0.9);">Приход, выбрано:</span>
<span class="r" style="right:489px;top:478px;">0.00</span>
<span style="left:276px;top:478px;transform:scaleX(0.9);">Расход, выбрано:</span>
<span class="r" style="right:324px;top:478px;color:#d00020">-11.00 RUR</span>
</div></body></html>
